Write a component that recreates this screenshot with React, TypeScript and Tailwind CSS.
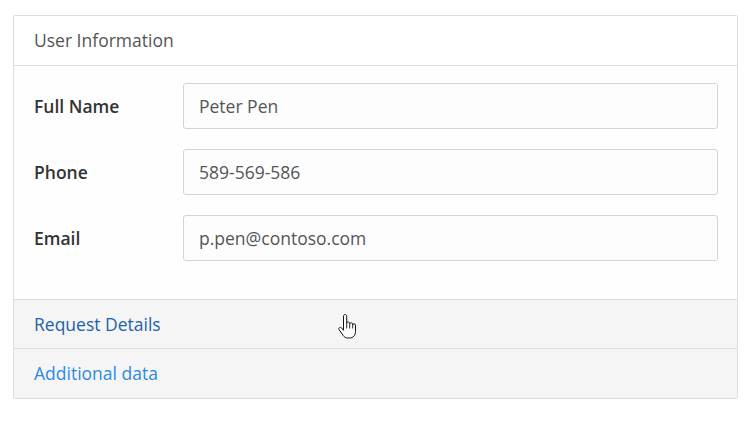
import React from "react";

function HandCursor() {
  return (
    <svg width="20" height="26" viewBox="0 0 20 26" className="absolute left-[338px] top-[314px]">
      <path
        d="M5.5 2.2c0-1 .7-1.7 1.6-1.7s1.6.7 1.6 1.7v7.3c0-.9.7-1.5 1.5-1.5s1.5.6 1.5 1.5v.8c0-.9.7-1.5 1.5-1.5s1.5.6 1.5 1.5v.9c0-.8.7-1.4 1.4-1.4.8 0 1.4.6 1.4 1.4v6.3c0 3.8-2.4 6.5-6 6.5H9.6c-1.9 0-3.2-.9-4.3-2.4L1.3 16c-.6-.9-.5-1.8.2-2.3.7-.5 1.6-.3 2.2.4l1.8 2.2V2.2z"
        fill="#fff"
        stroke="#111"
        strokeWidth="1"
        strokeLinejoin="round"
      />
      <path d="M8.7 9.5v5M11.7 10.3v4.2M14.7 11.2v3.3" stroke="#111" strokeWidth="0.9" fill="none" />
    </svg>
  );
}

function Row({ label, value }: { label: string; value: string }) {
  return (
    <div className="flex items-center">
      <div className="w-[149px] shrink-0 text-[17.5px] font-semibold text-[#333]">{label}</div>
      <div className="flex h-[46px] flex-1 items-center rounded-[3px] border border-[#d4d4d4] bg-[#fdfdfd] pl-[15px] text-[17.5px] text-[#555]">
        {value}
      </div>
    </div>
  );
}

export default function App() {
  return (
    <div
      className="relative h-[440px] w-[746px] bg-white"
      style={{ fontFamily: '"Open Sans", "Noto Sans", sans-serif' }}
    >
      <div className="ml-[13px] pt-[15px]">
        <div className="w-[725px] overflow-hidden rounded-[2px] border border-[#dedede]">
          <div className="flex h-[50px] items-center border-b border-[#dedede] bg-white px-[20px] text-[17.5px] text-[#555]">
            User Information
          </div>
          <div className="flex flex-col gap-[20px] bg-[#fefefe] pb-[38px] pl-[20px] pr-[19px] pt-[17px]">
            <Row label="Full Name" value="Peter Pen" />
            <Row label="Phone" value="589-569-586" />
            <Row label="Email" value="p.pen@contoso.com" />
          </div>
          <div className="flex h-[49px] items-center border-t border-[#dedede] bg-[#f5f5f5] px-[20px] text-[17.5px] text-[#1e63a8]">
            Request Details
          </div>
          <div className="flex h-[50px] items-center border-t border-[#dedede] bg-[#f5f5f5] px-[20px] text-[17.5px] text-[#2b8ae0]">
            Additional data
          </div>
        </div>
      </div>
      <HandCursor />
    </div>
  );
}
